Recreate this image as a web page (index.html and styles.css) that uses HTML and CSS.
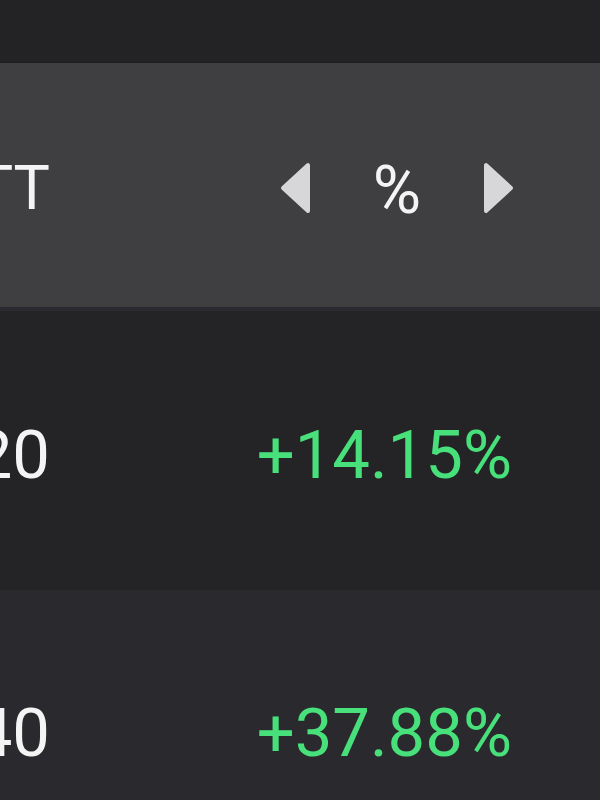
FILE: index.html
```html
<!DOCTYPE html>
<html>
<head>
<meta charset="utf-8">
<link rel="stylesheet" href="styles.css">
</head>
<body>
<div class="topbar"></div>
<div class="header">
  <div class="cell-left">TT</div>
  <div class="cell-right">
    <svg class="tri" width="31" height="52" viewBox="0 0 31 52"><polygon points="3,26 28,3 28,49" fill="#d7d7d9" stroke="#d7d7d9" stroke-width="4" stroke-linejoin="round"/></svg>
    <span class="unit">%</span>
    <svg class="tri" width="31" height="52" viewBox="0 0 31 52"><polygon points="28,26 3,3 3,49" fill="#d7d7d9" stroke="#d7d7d9" stroke-width="4" stroke-linejoin="round"/></svg>
  </div>
</div>
<div class="row">
  <div class="cell-left">20</div>
  <div class="cell-right gain">+14.15%</div>
</div>
<div class="row alt">
  <div class="cell-left">40</div>
  <div class="cell-right gain">+37.88%</div>
</div>
</body>
</html>
```
FILE: styles.css
```css
html, body {
  margin: 0;
  padding: 0;
  background: #29292e;
  overflow: hidden;
}
body {
  font-family: Roboto, "Noto Sans", sans-serif;
  color: #f4f4f5;
  width: 600px;
  height: 800px;
}
.topbar {
  height: 62px;
  background: #232325;
  border-bottom: 1px solid #1d1d1f;
}
.header {
  box-sizing: border-box;
  height: 248px;
  padding-top: 6px;
  background: #3f3f41;
  border-bottom: 4px solid #2b2a30;
  display: flex;
  align-items: center;
  font-size: 61px;
}
.row {
  box-sizing: border-box;
  height: 278px;
  padding-top: 9px;
  background: #242426;
  display: flex;
  align-items: center;
  font-size: 67px;
}
.row.alt {
  height: 210px;
  padding-top: 76px;
  background: #29292e;
  border-top: 1px solid #222225;
}
.cell-left {
  width: 50px;
  flex: none;
  display: flex;
  justify-content: flex-end;
  white-space: nowrap;
  overflow: hidden;
}
.cell-right {
  flex: 1;
  display: flex;
  justify-content: flex-end;
  align-items: center;
  padding-right: 88px;
  white-space: nowrap;
}
.header .cell-right {
  padding-right: 86px;
}
.unit {
  width: 172px;
  text-align: center;
  font-size: 66px;
  padding-top: 4px;
}
.tri {
  display: block;
}
.gain {
  color: #48e07b;
}
```
